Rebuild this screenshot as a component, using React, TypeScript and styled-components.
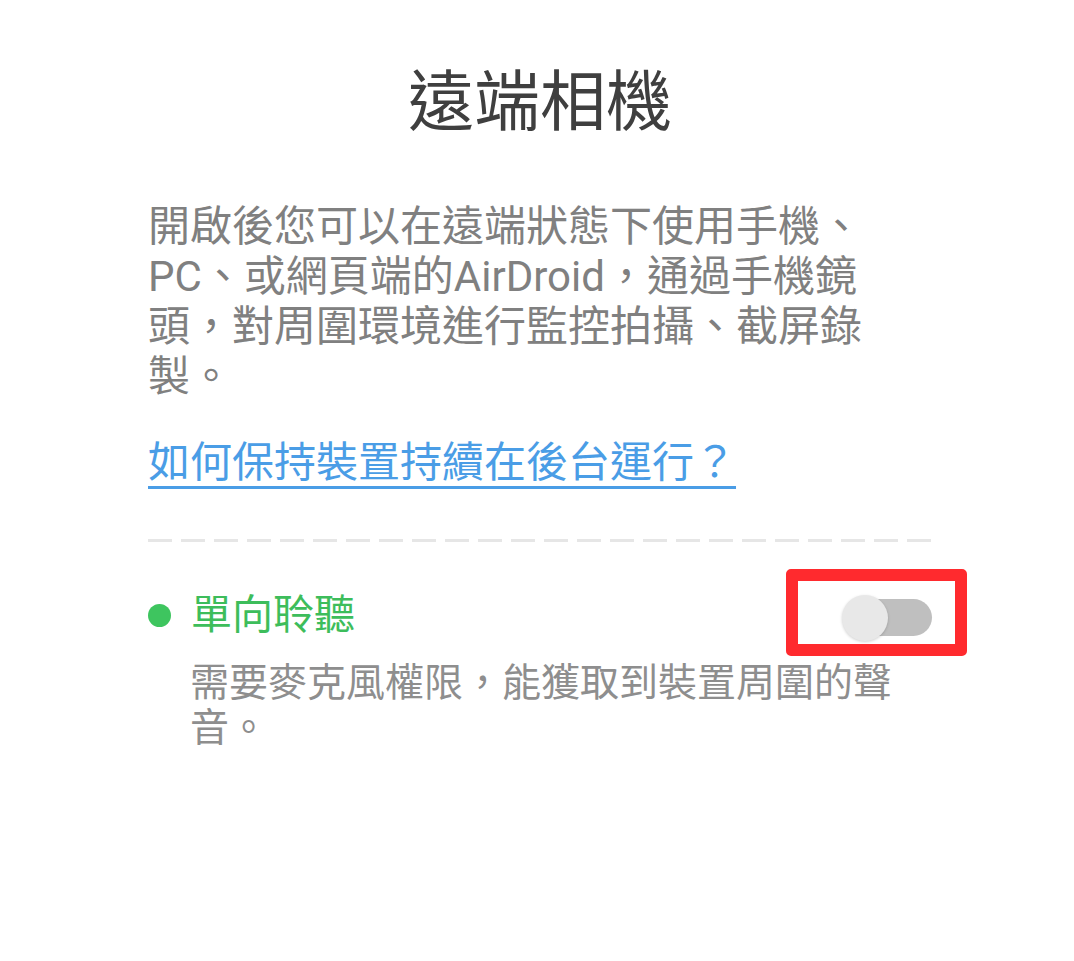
import styled, { createGlobalStyle } from 'styled-components';

const GlobalStyle = createGlobalStyle`
  html, body {
    margin: 0;
    padding: 0;
    background: #ffffff;
  }
  body {
    font-family: Roboto, 'Noto Sans CJK TC', 'Noto Sans', sans-serif;
  }
`;

const Page = styled.div`
  width: 1074px;
  min-height: 961px;
  box-sizing: border-box;
  padding: 63px 142px 0 148px;
  background: #ffffff;
`;

const Title = styled.h1`
  margin: 0;
  font-size: 66px;
  line-height: 80px;
  font-weight: 400;
  color: #3f3f3f;
  text-align: center;
`;

const Intro = styled.p`
  margin: 59px 0 0;
  max-width: 745px;
  font-size: 42px;
  line-height: 50px;
  color: #808080;
`;

const HelpLink = styled.a`
  display: inline-block;
  margin-top: 36px;
  font-size: 42px;
  line-height: 50px;
  color: #4a9de6;
  text-decoration: underline;
  text-decoration-thickness: 3px;
  text-underline-offset: 9px;
  cursor: pointer;
`;

const Divider = styled.div`
  margin-top: 51px;
  height: 3px;
  background-image: repeating-linear-gradient(
    to right,
    #e6e6e6 0 24px,
    transparent 24px 33px
  );
`;

const OptionRow = styled.div`
  margin-top: 47px;
  display: flex;
  align-items: center;
  justify-content: space-between;
`;

const OptionLabel = styled.div`
  display: flex;
  align-items: center;
  gap: 20px;
`;

const Dot = styled.span`
  width: 23px;
  height: 23px;
  border-radius: 50%;
  background: #3ec55f;
  flex-shrink: 0;
`;

const OptionTitle = styled.span`
  font-size: 41px;
  line-height: 50px;
  color: #3dbd5b;
`;

const Toggle = styled.div`
  position: relative;
  width: 90px;
  height: 46px;
  margin-top: 6px;
`;

const Track = styled.span`
  position: absolute;
  right: 0;
  top: 4px;
  width: 80px;
  height: 37px;
  border-radius: 19px;
  background: #bfbfbf;
`;

const Thumb = styled.span`
  position: absolute;
  left: 0;
  top: 0;
  width: 46px;
  height: 46px;
  border-radius: 50%;
  background: #e8e8e8;
  box-shadow: 0 1px 3px rgba(0, 0, 0, 0.18);
`;

const Highlight = styled.span`
  position: absolute;
  left: -56px;
  top: -26px;
  width: 181px;
  height: 87px;
  box-sizing: border-box;
  border: 12px solid #ff2a2e;
  border-radius: 5px;
  pointer-events: none;
`;

const OptionDesc = styled.p`
  margin: 20px 0 0;
  padding-left: 42px;
  max-width: 715px;
  font-size: 39px;
  line-height: 45px;
  color: #8e8e8e;
`;

function App(): JSX.Element {
  return (
    <>
      <GlobalStyle />
      <Page>
        <Title>遠端相機</Title>
        <Intro>
          開啟後您可以在遠端狀態下使用手機、PC、或網頁端的AirDroid，通過手機鏡頭，對周圍環境進行監控拍攝、截屏錄製。
        </Intro>
        <HelpLink>如何保持裝置持續在後台運行？</HelpLink>
        <Divider />
        <OptionRow>
          <OptionLabel>
            <Dot />
            <OptionTitle>單向聆聽</OptionTitle>
          </OptionLabel>
          <Toggle>
            <Track />
            <Thumb />
            <Highlight />
          </Toggle>
        </OptionRow>
        <OptionDesc>需要麥克風權限，能獲取到裝置周圍的聲音。</OptionDesc>
      </Page>
    </>
  );
}

export default App;
